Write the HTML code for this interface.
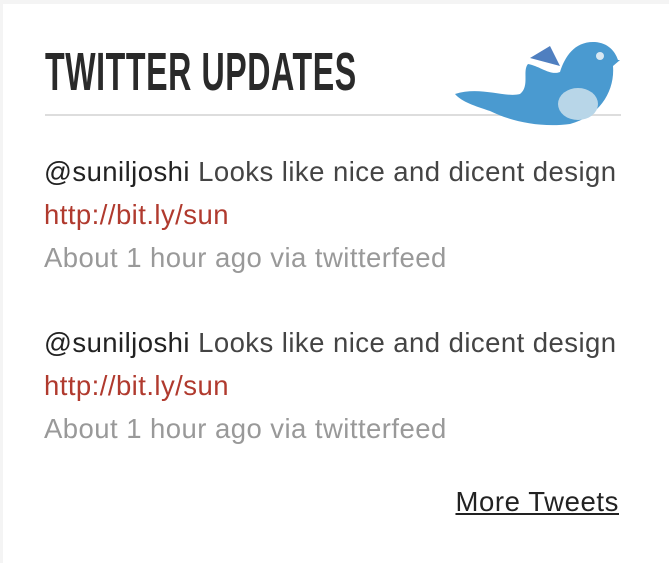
<!DOCTYPE html>
<html><head><style>
body{margin:0;width:669px;height:563px;background:#f4f4f4;overflow:hidden;font-family:"Liberation Sans",sans-serif}
.box{position:absolute;left:3px;top:4px;width:666px;height:559px;background:#fff}
.title{position:absolute;left:45px;top:43px;font-size:54px;font-weight:bold;color:#2a2a2a;transform:scaleX(0.595);transform-origin:left top;white-space:nowrap;letter-spacing:1px;line-height:58px}
.line{position:absolute;left:45px;top:114px;width:576px;height:2px;background:#ddd}
.t{position:absolute;left:44px;font-size:27.5px;white-space:nowrap;line-height:28px;letter-spacing:0.45px}
.u{color:#222}.m{color:#444}.l{color:#b03a2e}.g{color:#999}
.more{position:absolute;right:50px;top:486px;font-size:27.5px;color:#222;text-decoration:underline;letter-spacing:0.6px;white-space:nowrap}
</style></head><body>
<div class="box"></div>
<div class="title">TWITTER UPDATES</div>
<div class="line"></div>
<svg style="position:absolute;left:450px;top:36px" width="175" height="95" viewBox="0 0 175 95">
<path d="M80 22 L100 10 L110 30 Z" fill="#4f7fc0"/>
<path d="M5 58 C30 50 55 62 70 58 C80 50 72 35 78 28 C90 30 100 40 110 36 C115 20 125 5 145 6 C158 7 165 15 168 24 L170 24 L163 30 C165 55 150 80 120 88 C90 92 60 85 40 75 C25 70 12 66 5 58 Z" fill="#4a9ad0"/>
<ellipse cx="128" cy="68" rx="20" ry="16" fill="#b8d6e8"/>
<circle cx="150" cy="20" r="4" fill="#d8e8f2"/>
</svg>
<div class="t" style="top:158px"><span class="u">@suniljoshi</span> <span class="m">Looks like nice and dicent design</span></div>
<div class="t l" style="top:201px">http://bit.ly/sun</div>
<div class="t g" style="top:244px">About 1 hour ago via twitterfeed</div>
<div class="t" style="top:329px"><span class="u">@suniljoshi</span> <span class="m">Looks like nice and dicent design</span></div>
<div class="t l" style="top:372px">http://bit.ly/sun</div>
<div class="t g" style="top:415px">About 1 hour ago via twitterfeed</div>
<div class="more">More Tweets</div>
</body></html>
